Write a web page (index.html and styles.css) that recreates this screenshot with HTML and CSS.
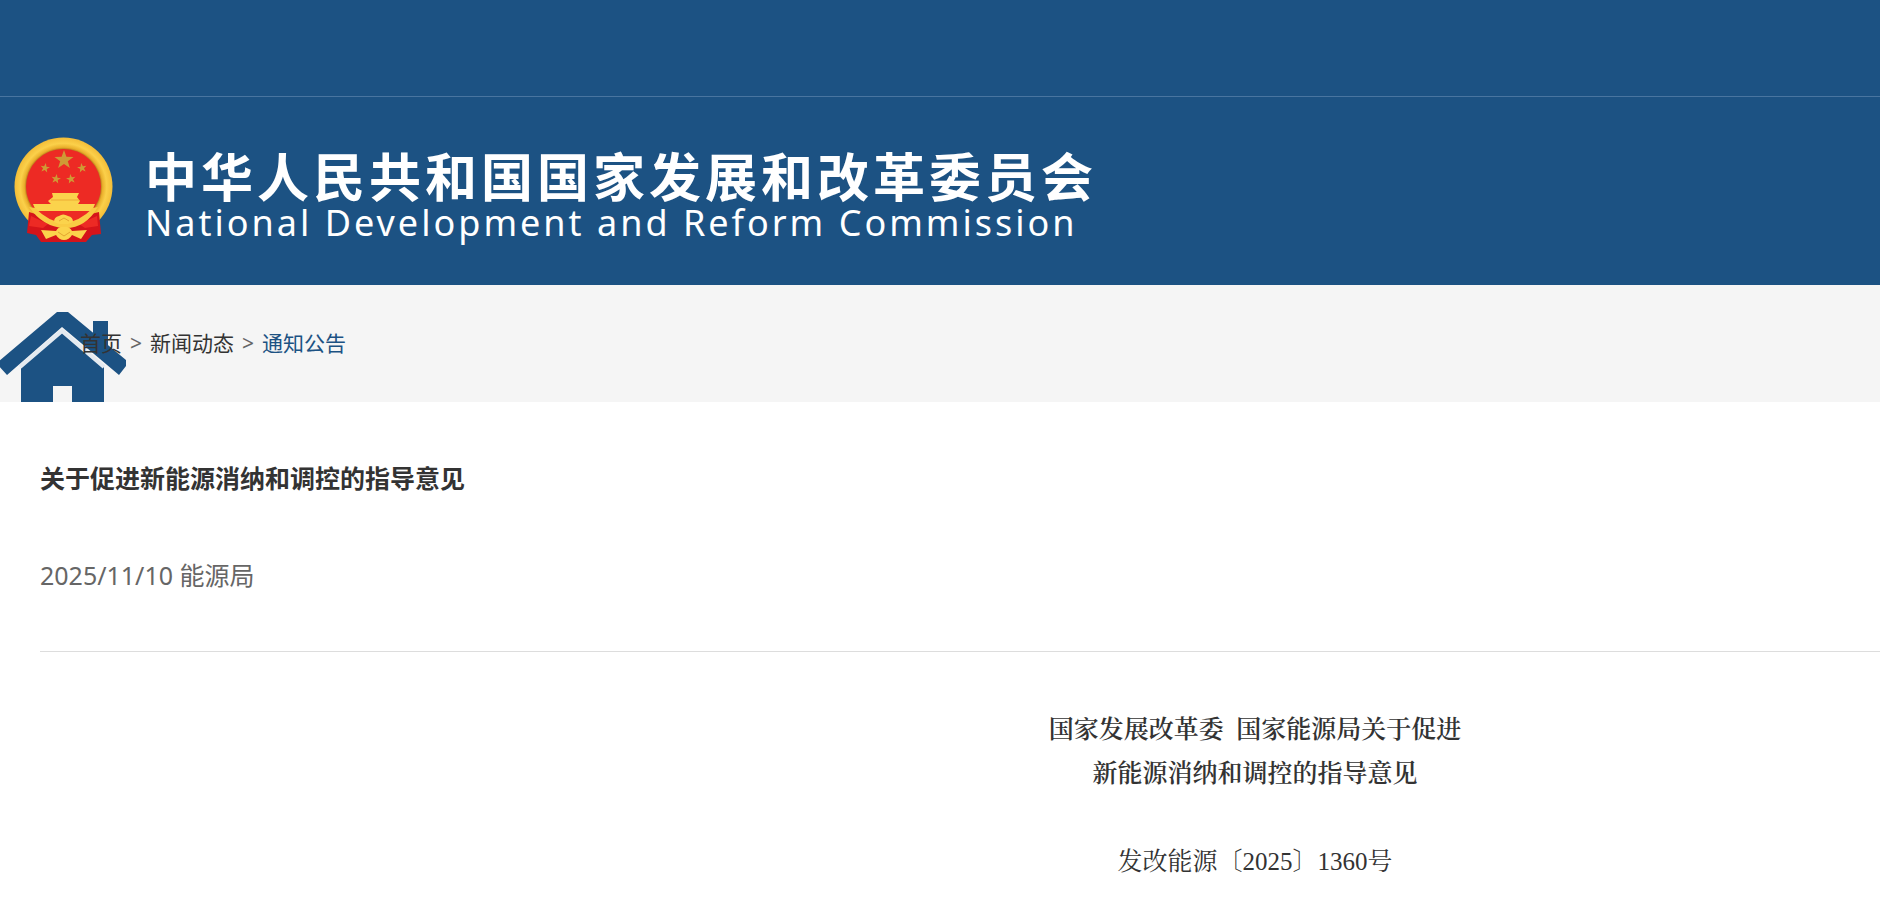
FILE: index.html
```html
<!DOCTYPE html>
<html lang="zh-CN">
<head>
<meta charset="utf-8">
<title>关于促进新能源消纳和调控的指导意见</title>
<link rel="stylesheet" href="styles.css">
</head>
<body>
<header class="site-header">
  <div class="top-strip"></div>
  <div class="brand">
    <svg class="emblem" width="99" height="106" viewBox="0 0 99 106" aria-hidden="true">
      <defs>
        <radialGradient id="ring" cx="50%" cy="50%" r="50%">
          <stop offset="0.76" stop-color="#b9791c"/>
          <stop offset="0.8" stop-color="#eab02c"/>
          <stop offset="0.88" stop-color="#fbd04a"/>
          <stop offset="1" stop-color="#f3bd38"/>
        </radialGradient>
        <path id="star" d="M0-10 2.4-3.2 9.5-3.1 3.8 1.2 5.9 8.1 0 4-5.9 8.1-3.8 1.2-9.5-3.1-2.4-3.2Z"/>
      </defs>
      <circle cx="49.500" cy="49.500" r="49" fill="url(#ring)"/>
      <circle cx="49.500" cy="49.500" r="37.500" fill="#ed2a24"/>
      <g fill="#cf9a35">
        <use href="#star" transform="translate(50 23)"/>
        <use href="#star" transform="translate(31 31) rotate(10) scale(.5)"/>
        <use href="#star" transform="translate(68 31) rotate(-10) scale(.5)"/>
        <use href="#star" transform="translate(42 42) rotate(10) scale(.5)"/>
        <use href="#star" transform="translate(57 42) rotate(-10) scale(.5)"/>
      </g>
      <path fill="#fbd34c" d="M38 56h27l-2 4 3 4-2 3h17l-3 7H22l-3-7h18l-3-3 5-4Z"/>
      <path stroke="#e79b2b" stroke-width=".7" d="M37 63h28" fill="none"/>
      <path fill="#d5141a" d="M15 75 25 78Q37 87 49 88 62 87 73 78l12-3 2 22-9 1-6 7H27l-5-7-9-2Z"/>
      <path fill="#ed2a24" d="M17 79 34 87 29 91 15 89ZM83 79 65 87l6 4 13-2Z"/>
      <path fill="#f9cb44" d="M15 70Q29 90 50 91T84 70l-5 1Q65 85 50 86 35 85 21 71Z"/>
      <path fill="#fbd34c" d="M40 85q0-5 5-6 4-3 9 0 5 1 5 6l-5 2h-9ZM27 93l15 1q3-5 8-4 5-1 8 4l15-1-6 9-9-4q-3 5-8 5t-8-5l-10 4Z"/>
      <path stroke="#d99124" stroke-width=".7" fill="none" d="M45 84l5-3 5 3M44 95l6 4 6-4"/>
    </svg>
    <div class="brand-names">
      <div class="brand-cn">中华人民共和国国家发展和改革委员会</div>
      <div class="brand-en">National Development and Reform Commission</div>
    </div>
  </div>
</header>
<nav class="crumbs" aria-label="面包屑">
  <svg class="home" width="126" height="90" viewBox="0 0 126 90" aria-hidden="true">
    <path fill="#1c5283" d="M93 30V9h15v34Z"/>
    <path fill="#1c5283" d="M21 55 62 19l42 36v45H72V74H53v26H21Z"/>
    <path fill="none" stroke="#e4eaf0" stroke-width="4" d="M20 55 62 19l42 36"/>
    <path fill="#1c5283" d="M57 0h11l58 48v6l-7 9L62 15 7 63-1 54v-5Z"/>
  </svg>
  <div class="trail">
    <a href="#">首页</a><span>&gt;</span><a href="#">新闻动态</a><span>&gt;</span><a class="current" href="#">通知公告</a>
  </div>
</nav>
<main class="page">
  <article class="article">
    <h1 class="title">关于促进新能源消纳和调控的指导意见</h1>
    <div class="meta">2025/11/10 能源局</div>
    <div class="content">
      <p><strong>国家发展改革委&nbsp; 国家能源局关于促进</strong></p>
      <p><strong>新能源消纳和调控的指导意见</strong></p>
      <p class="doc-number">发改能源〔2025〕1360号</p>
    </div>
  </article>
</main>
</body>
</html>
```
FILE: styles.css
```css
* { box-sizing: border-box; }

body {
  margin: 0;
  background: #fff;
  color: #333;
  font-family: "Noto Sans", "Noto Sans CJK SC", sans-serif;
}

.site-header { background: #1c5283; color: #fff; }

.top-strip { height: 97px; border-bottom: 1px solid #4975a0; }

.brand {
  display: flex;
  gap: 32px;
  padding: 40px 14px 42px;
}

.emblem { flex: none; }

.brand-names { padding-top: 10px; white-space: nowrap; }

.brand-cn {
  font: bold 52px/56px "Noto Sans CJK SC", sans-serif;
  letter-spacing: 4px;
}

.brand-en {
  padding-top: 2px;
  font-size: 36px;
  line-height: 36px;
  letter-spacing: 3px;
}

.crumbs {
  position: relative;
  padding: 41px 80px 42px;
  background: #f5f5f5;
}

.home { position: absolute; left: 0; bottom: 0; }

.trail {
  position: relative;
  display: flex;
  gap: 8px;
  font-size: 21px;
  line-height: 34px;
  color: #666;
}

.trail a { color: #333; text-decoration: none; }

.trail .current { color: #1c5283; }

.page { overflow: hidden; }

/* The article column runs past the right edge of the window. */
.article { width: 133.5vw; padding: 56px 40px 0; }

.title { margin: 0; font-size: 25px; line-height: 40px; }

.meta {
  padding: 56px 0 55px;
  border-bottom: 1px solid #ddd;
  font-size: 25px;
  line-height: 42px;
  color: #666;
}

.content {
  padding-top: 56px;
  font-family: "Liberation Serif", "Noto Serif CJK SC", "Noto Sans CJK SC", serif;
  font-size: 25px;
  line-height: 44px;
  text-align: center;
}

.content p { margin: 0; }

.content strong { font-weight: 600; }

.content .doc-number { margin-top: 44px; }
```
